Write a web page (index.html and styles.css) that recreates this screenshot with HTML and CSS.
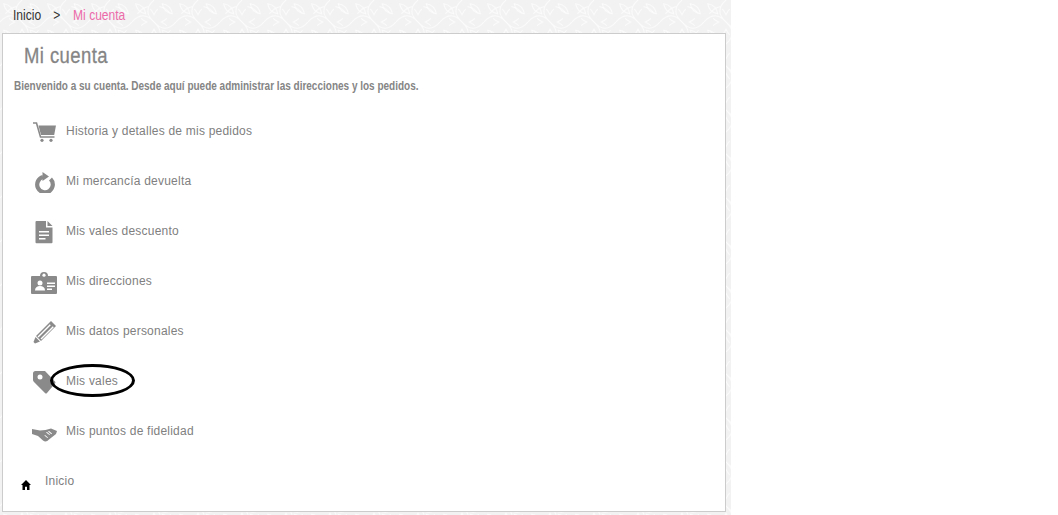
FILE: index.html
```html
<!DOCTYPE html>
<html lang="es">
<head>
  <meta charset="UTF-8">
  <title>Mi cuenta</title>
  <link rel="stylesheet" href="styles.css">
</head>
<body>
  <div class="page">
    <div class="breadcrumb">
      <div class="breadcrumb-inner">
        <a href="#">Inicio</a>
        <span class="sep">&gt;</span>
        <span class="current">Mi cuenta</span>
      </div>
    </div>
    <div class="card">
      <h1>Mi cuenta</h1>
      <p class="intro">Bienvenido a su cuenta. Desde aquí puede administrar las direcciones y los pedidos.</p>
      <ul class="links">
        <li>
          <span class="icon">
            <svg width="23" height="20" viewBox="0 0 23 20"><path class="line" d="M0 1h3.500l4 14h14" stroke-width="1.600"/><path d="M5.500 3.500H23l-1.800 9.500H8z"/><circle cx="9" cy="18.300" r="1.600"/><circle cx="18" cy="18.300" r="1.600"/></svg>
          </span>
          <a href="#">Historia y detalles de mis pedidos</a>
        </li>
        <li>
          <span class="icon">
            <svg width="22" height="22" viewBox="0 0 22 22"><path class="line" d="M17.500 8A7.800 7.800 0 1 1 10 6" stroke-width="4.200"/><path d="M9.500 1l6.500 4.500L9.500 10z"/></svg>
          </span>
          <a href="#">Mi mercancía devuelta</a>
        </li>
        <li>
          <span class="icon">
            <svg width="18" height="24" viewBox="0 0 18 24"><path d="M1.500 1H11v6.500h6.500v14.800a1 1 0 0 1-1 1h-15a1 1 0 0 1-1-1V2a1 1 0 0 1 1-1z"/><path d="M12.500 1l5 5h-5z"/><path class="cut" d="M4 11h10v1.500H4zM4 14.500h10V16H4zM4 18h6.500v1.500H4z"/></svg>
          </span>
          <a href="#">Mis vales descuento</a>
        </li>
        <li>
          <span class="icon">
            <svg width="26" height="24" viewBox="0 0 26 24"><path d="M1 6h8a4 4 0 0 1 8 0h8a1 1 0 0 1 1 1v16a1 1 0 0 1-1 1H1a1 1 0 0 1-1-1V7a1 1 0 0 1 1-1z"/><circle class="cut" cx="13" cy="5.200" r="1.600"/><circle class="cut" cx="9" cy="13" r="2.500"/><path class="cut" d="M4 20.500c0-3 2-4.500 5-4.500s5 1.500 5 4.500zM16 12.500h8V14h-8zM16 15.500h8V17h-8zM16 18.500h5V20h-5z"/></svg>
          </span>
          <a href="#">Mis direcciones</a>
        </li>
        <li>
          <span class="icon">
            <svg width="23" height="23" viewBox="0 0 23 23"><path d="M18 0l5 5L8 20l-5-5z"/><path class="cut" d="M16.800 3.200l1 1L5.500 16.500l-1-1zM19.800 5.200l1 1L8.500 18.500l-1-1z"/><path d="M2.500 16l4.500 4.500-5 2-1.500-1.500z"/></svg>
          </span>
          <a href="#">Mis datos personales</a>
        </li>
        <li>
          <span class="icon">
            <svg width="24" height="24" viewBox="0 0 24 24"><path d="M1 3.500Q1 1 3.500 1H13l10 10.500q1 1 0 2L15 23q-1 1-2 0L2 12q-1-1-1-2z"/><circle class="cut" cx="8" cy="7" r="2.500"/></svg>
          </span>
          <a href="#">Mis vales</a>
        </li>
        <li>
          <span class="icon icon-low">
            <svg width="25" height="14" viewBox="0 0 25 14"><path d="M0 1l8 1.500L13.500 2 19 .5 25 3l-1 3-7 5.500q-3 3.500-6 1L6 8 0 6z"/><path class="cut" d="M14 4.500l1 -.6 3 2.600-.6.6zM16 3.500l1-.5 3 2.600-.6.6zM13 7l3 2.500-.6.6-3-2.500z"/></svg>
          </span>
          <a href="#">Mis puntos de fidelidad</a>
        </li>
      </ul>
      <div class="home-link">
        <span class="home-icon">
          <svg width="10" height="10" viewBox="0 0 10 10"><path d="M5 0l5 5H8.500v5H6V6.800H4V10H1.500V5H0z"/></svg>
        </span>
        <a href="#">Inicio</a>
      </div>
    </div>
    <!-- hand drawn mark from the screenshot -->
    <span class="circle-mark"></span>
  </div>
</body>
</html>
```

FILE: styles.css
```css
html, body {
  margin: 0;
  padding: 0;
  background: #fff;
}

body {
  font-family: 'Liberation Sans', Arial, sans-serif;
  overflow: hidden;
}

a {
  color: inherit;
  text-decoration: none;
}

.page {
  position: relative;
  width: 731px;
  height: 515px;
  box-sizing: border-box;
  padding: 0 5px 0 2px;
  background-color: #f2f2f2;
  background-image: url("data:image/svg+xml,%3Csvg xmlns='http://www.w3.org/2000/svg' width='96' height='96' fill='none' stroke='%23fbfbfb' stroke-width='2.200'%3E%3Cpath d='M0 48C16 30 32 30 48 48S80 66 96 48M48 0C30 16 30 32 48 48S66 80 48 96'/%3E%3Cpath d='M8 8c12 2 20 10 22 22-12-2-20-10-22-22zM66 8c12 2 20 10 22 22-12-2-20-10-22-22zM8 66c12 2 20 10 22 22-12-2-20-10-22-22zM66 66c12 2 20 10 22 22-12-2-20-10-22-22z'/%3E%3Cpath d='M12 30c6-8 14-14 24-16M60 14c10 2 18 8 24 16M84 66c-6 8-14 14-24 16M36 82c-10-2-18-8-24-16'/%3E%3Cpath d='M40 20c4 4 6 8 8 12 2-4 4-8 8-12M40 76c4-4 6-8 8-12 2 4 4 8 8 12M20 40c4 4 8 6 12 8-4 2-8 4-12 8M76 40c-4 4-8 6-12 8 4 2 8 4 12 8'/%3E%3C/svg%3E");
  background-size: 44px 44px;
}

.breadcrumb {
  height: 33px;
  box-sizing: border-box;
  padding: 0 0 4px 11px;
  display: flex;
  align-items: center;
}

.breadcrumb-inner {
  display: flex;
  font-size: 14px;
  color: #333;
  transform: scaleX(0.86);
  transform-origin: left center;
}

.breadcrumb .sep {
  margin: 0 15px 0 14px;
}

.breadcrumb .current {
  color: #ec6aa9;
}

.card {
  height: 479px;
  box-sizing: border-box;
  background: #fff;
  border: 1px solid #ccc;
  padding: 0 11px;
}

h1 {
  margin: 8px 0 0 10px;
  font-size: 22px;
  font-weight: normal;
  line-height: 28px;
  letter-spacing: 0.5px;
  color: #858585;
  -webkit-text-stroke: 0.3px #858585;
  transform: scaleX(0.84);
  transform-origin: left center;
}

.intro {
  margin: 8px 0 0;
  font-size: 12.500px;
  font-weight: bold;
  line-height: 16px;
  color: #858585;
  transform: scaleX(0.8);
  transform-origin: left center;
}

.links {
  list-style: none;
  margin: 12px 0 0;
  padding: 0;
}

.links li {
  display: flex;
  align-items: center;
  height: 50px;
  font-size: 12px;
  letter-spacing: 0.22px;
  color: #808080;
}

.icon {
  width: 26px;
  margin: 0 9px 0 17px;
  display: flex;
  justify-content: center;
  fill: #8a8a8a;
}

.icon svg {
  margin-top: 2px;
}

.icon-low svg {
  margin-top: 7px;
}

.line {
  fill: none;
  stroke: #8a8a8a;
}

.cut {
  fill: #fff;
}

.home-link {
  display: flex;
  align-items: center;
  height: 50px;
  font-size: 12px;
  letter-spacing: 0.22px;
  color: #808080;
}

.home-icon {
  width: 31px;
  padding-left: 7px;
  box-sizing: border-box;
  display: flex;
  fill: #000;
}

.home-icon svg {
  margin-top: 7px;
}

.circle-mark {
  position: absolute;
  left: 50px;
  top: 364px;
  width: 85px;
  height: 33px;
  box-sizing: border-box;
  border: 3px solid #000;
  border-radius: 50%;
}
```
